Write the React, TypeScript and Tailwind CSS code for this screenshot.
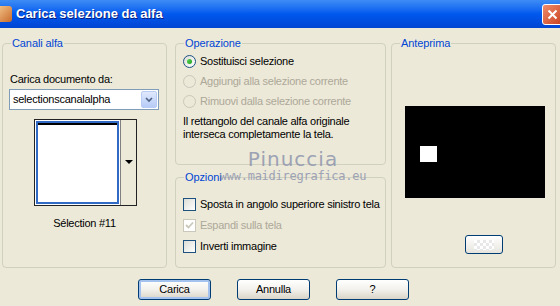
import React from "react";

const font = { fontFamily: '"Liberation Sans", Tahoma, Arial, sans-serif' };

function Radio({ checked, disabled }: { checked?: boolean; disabled?: boolean }) {
  return (
    <span
      className={
        "flex h-[13px] w-[13px] shrink-0 items-center justify-center rounded-full border " +
        (disabled
          ? "border-[#CAC8BB] bg-[#ECE9D8]"
          : "border-[#1C5180] bg-gradient-to-br from-[#DCDCD7] to-white")
      }
    >
      {checked && (
        <span className="h-[5px] w-[5px] rounded-full bg-gradient-to-br from-[#55D451] to-[#21A121]" />
      )}
    </span>
  );
}

function Check({ checked, disabled }: { checked?: boolean; disabled?: boolean }) {
  return (
    <span
      className={
        "flex h-[13px] w-[13px] shrink-0 items-center justify-center border " +
        (disabled
          ? "border-[#CAC8BB] bg-white"
          : "border-[#1C5180] bg-gradient-to-br from-[#DCDCD7] to-white")
      }
    >
      {checked && (
        <svg width="9" height="9" viewBox="0 0 9 9">
          <path d="M1 4l2.5 2.5L8 1.5" fill="none" stroke="#CAC8BB" strokeWidth="1.8" />
        </svg>
      )}
    </span>
  );
}

function Group({
  label,
  className,
  children,
}: {
  label: string;
  className: string;
  children?: React.ReactNode;
}) {
  return (
    <fieldset className={"min-w-0 shrink-0 rounded-[4px] border border-[#D0D0BF] px-[7px] " + className}>
      <legend className="ml-[1px] px-[1px] text-[11px] leading-[14px] tracking-[-0.1px] text-[#0046D5]">{label}</legend>
      {children}
    </fieldset>
  );
}

function XpButton({ label, def }: { label: string; def?: boolean }) {
  return (
    <button
      className={
        "h-[21px] w-[73px] rounded-[3px] border border-[#003C74] bg-gradient-to-b from-white via-[#F2F1EC] to-[#D9D4C8] text-[11px] text-black " +
        (def ? "shadow-[inset_0_0_0_2px_#A3C2EE]" : "")
      }
    >
      {label}
    </button>
  );
}

export default function App() {
  return (
    <div
      className="relative h-[306px] w-[560px] overflow-hidden bg-[#ECE9D8] text-[11px] tracking-[-0.25px] text-black"
      style={font}
    >
      {/* title bar */}
      <div className="flex h-[28px] items-center bg-gradient-to-b from-[#3D8CF5] via-[#0058EE] to-[#0045D2]">
        <div className="ml-[-4px] h-[16px] w-[16px] rounded-[3px] bg-gradient-to-br from-[#F6C98E] to-[#C76B28]" />
        <span className="ml-[4px] text-[13px] font-bold tracking-normal text-white [text-shadow:1px_1px_0_#0A1F80]">
          Carica selezione da alfa
        </span>
        <div className="ml-auto mr-[-3px] flex h-[21px] w-[21px] items-center justify-center rounded-[3px] border border-white bg-gradient-to-br from-[#F08B6A] to-[#C8401E]">
          <svg width="11" height="11" viewBox="0 0 11 11">
            <path d="M1.5 1.5l8 8M9.5 1.5l-8 8" stroke="white" strokeWidth="2" />
          </svg>
        </div>
      </div>

      {/* groups */}
      <div className="flex gap-[8px] pl-[2px] pt-[8px]">
        <Group label="Canali alfa" className="h-[232px] w-[165px]">
          <div className="mt-[22px] leading-[14px]">Carica documento da:</div>
          <div className="ml-[-1px] mt-[3px] flex h-[21px] w-[150px] items-center border border-[#7F9DB9] bg-white">
            <span className="pl-[3px]">selectionscanalalpha</span>
            <span className="ml-auto mr-[1px] flex h-[17px] w-[16px] items-center justify-center rounded-[2px] border border-[#B9CCF5] bg-gradient-to-b from-[#E0E9FD] to-[#B7CBF6]">
              <svg width="8" height="6" viewBox="0 0 8 6">
                <path d="M1 1l3 3 3-3" fill="none" stroke="#4D6185" strokeWidth="1.6" />
              </svg>
            </span>
          </div>
          <div className="ml-[24px] mt-[9px] flex h-[87px] w-[103px] border border-[#222] bg-white">
            <div className="m-[1px] w-[83px] border-2 border-[#316AC5] bg-white">
              <div className="h-[2px] bg-black" />
            </div>
            <div className="flex flex-1 items-center justify-center border-l border-[#808080] bg-[#ECE9D8]">
              <svg width="8" height="5" viewBox="0 0 8 5">
                <path d="M0 0h8L4 4z" fill="black" />
              </svg>
            </div>
          </div>
          <div className="mt-[10px] text-center leading-[14px]">Sélection #11</div>
        </Group>

        <div className="flex shrink-0 flex-col gap-[5px]">
          <Group label="Operazione" className="h-[129px] w-[211px]">
            <div className="mt-[4px] flex flex-col gap-[6px] leading-[14px]">
              <div className="flex items-center gap-[4px]">
                <Radio checked />
                <span>Sostituisci selezione</span>
              </div>
              <div className="flex items-center gap-[4px] text-[#ACA899]">
                <Radio disabled />
                <span>Aggiungi alla selezione corrente</span>
              </div>
              <div className="flex items-center gap-[4px] text-[#ACA899]">
                <Radio disabled />
                <span>Rimuovi dalla selezione corrente</span>
              </div>
            </div>
            <div className="mt-[7px] leading-[13px]">
              Il rettangolo del canale alfa originale
              <br />
              interseca completamente la tela.
            </div>
          </Group>
          <Group label="Opzioni" className="h-[98px] w-[211px]">
            <div className="mt-[13px] flex flex-col gap-[7px] leading-[14px]">
              <div className="flex items-center gap-[4px]">
                <Check />
                <span className="whitespace-nowrap">Sposta in angolo superiore sinistro tela</span>
              </div>
              <div className="flex items-center gap-[4px] text-[#ACA899]">
                <Check checked disabled />
                <span>Espandi sulla tela</span>
              </div>
              <div className="flex items-center gap-[4px]">
                <Check />
                <span>Inverti immagine</span>
              </div>
            </div>
          </Group>
        </div>

        <Group label="Anteprima" className="ml-[-3px] h-[232px] w-[165px]">
          <div className="ml-[6px] mt-[56px] h-[92px] w-[140px] bg-black pl-[15px] pt-[40px]">
            <div className="h-[16px] w-[17px] bg-white" />
          </div>
          <div className="ml-[66px] mt-[37px] flex h-[19px] w-[38px] items-center justify-center rounded-[3px] border border-[#003C74] bg-gradient-to-b from-white to-[#E6E4DC]">
            <div className="h-[10px] w-[20px] bg-[repeating-conic-gradient(#E8E8E8_0_25%,#FFFFFF_0_50%)] bg-[length:6px_6px]" />
          </div>
        </Group>
      </div>

      {/* buttons */}
      <div className="mt-[11px] flex gap-[26px] pl-[138px]">
        <XpButton label="Carica" def />
        <XpButton label="Annulla" />
        <XpButton label="?" />
      </div>

      {/* watermark */}
      <div className="pointer-events-none absolute left-[228px] top-[148px] flex w-[130px] flex-col items-center text-[#8A91AC] opacity-80">
        <span className="text-[20px] leading-[22px] tracking-[1px]" style={{ fontFamily: '"DejaVu Sans", sans-serif' }}>
          Pinuccia
        </span>
        <span className="text-[12px] leading-[12px]" style={{ fontFamily: '"DejaVu Sans Mono", monospace' }}>
          www.maidiregrafica.eu
        </span>
      </div>
    </div>
  );
}
